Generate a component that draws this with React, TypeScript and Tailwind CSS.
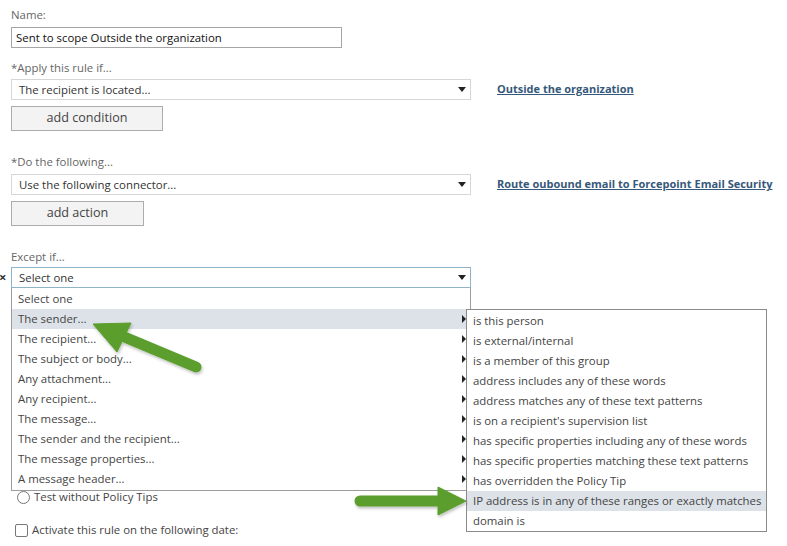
import React from 'react';

const senderItems = [
  'Select one',
  'The sender...',
  'The recipient...',
  'The subject or body...',
  'Any attachment...',
  'Any recipient...',
  'The message...',
  'The sender and the recipient...',
  'The message properties...',
  'A message header...',
];

const subItems = [
  'is this person',
  'is external/internal',
  'is a member of this group',
  'address includes any of these words',
  'address matches any of these text patterns',
  "is on a recipient's supervision list",
  'has specific properties including any of these words',
  'has specific properties matching these text patterns',
  'has overridden the Policy Tip',
  'IP address is in any of these ranges or exactly matches',
  'domain is',
];

function DownArrow() {
  return (
    <svg width="8" height="5" viewBox="0 0 8 5" className="shrink-0">
      <path d="M0 0h8L4 5z" fill="#222" />
    </svg>
  );
}

function RightArrow() {
  return (
    <svg width="4" height="8" viewBox="0 0 4 8" className="shrink-0">
      <path d="M0 0v8l4-4z" fill="#222" />
    </svg>
  );
}

function Select({ value, focused }: { value: string; focused?: boolean }) {
  return (
    <div
      className={`w-[460px] h-[21px] flex items-center justify-between pl-[7px] pr-[4px] bg-white border text-[#333] ${
        focused ? 'border-[#8fb3c9]' : 'border-[#d6d6d6]'
      }`}
    >
      <span className="whitespace-nowrap">{value}</span>
      <DownArrow />
    </div>
  );
}

function Label({ children }: { children: React.ReactNode }) {
  return <div className="h-[16px] leading-[16px] text-[#666]">{children}</div>;
}

function ActionButton({ children, width }: { children: React.ReactNode; width: string }) {
  return (
    <div
      className={`${width} h-[25px] flex items-center justify-center bg-[#f3f3f3] border border-[#acacac] text-[#444] text-[12.6px]`}
    >
      {children}
    </div>
  );
}

// green callout arrows drawn over the menus
function Arrows() {
  return (
    <svg className="absolute inset-0 pointer-events-none z-30" width="787" height="546">
      <defs>
        <filter id="sh" x="-20%" y="-20%" width="140%" height="140%">
          <feDropShadow dx="1" dy="2" stdDeviation="1.5" floodColor="#000" floodOpacity="0.25" />
        </filter>
      </defs>
      <g filter="url(#sh)" fill="#5b9e2d" stroke="#5b9e2d">
        <line x1="196" y1="367" x2="122" y2="336" strokeWidth="11" strokeLinecap="round" />
        <path d="M93 324 L131 323 L117 352 Z" strokeWidth="1" strokeLinejoin="round" />
        <line x1="360" y1="501" x2="440" y2="501" strokeWidth="11" strokeLinecap="round" />
        <path d="M466 501 L438 487 L438 515 Z" strokeWidth="1" strokeLinejoin="round" />
      </g>
    </svg>
  );
}

export default function App() {
  return (
    <div
      className="relative w-[787px] h-[546px] overflow-hidden bg-white text-[11.4px]"
      style={{ fontFamily: '"Open Sans", "Noto Sans", Arial, sans-serif' }}
    >
      <div className="flex flex-col pl-[11px] pt-[7px]">
        <Label>Name:</Label>
        <div className="mt-[4px] w-[331px] h-[21px] flex items-center pl-[4px] border border-[#a6a6a6] text-[#111]">
          Sent to scope Outside the organization
        </div>

        <div className="mt-[12px]">
          <Label>*Apply this rule if...</Label>
        </div>
        <div className="mt-[3px] flex items-center gap-[26px]">
          <Select value="The recipient is located..." />
          <span className="whitespace-nowrap font-bold underline text-[11px] text-[#36587a]">
            Outside the organization
          </span>
        </div>
        <div className="mt-[6px]">
          <ActionButton width="w-[152px]">add condition</ActionButton>
        </div>

        <div className="mt-[23px]">
          <Label>*Do the following...</Label>
        </div>
        <div className="mt-[4px] flex items-center gap-[26px]">
          <Select value="Use the following connector..." />
          <span className="whitespace-nowrap font-bold underline text-[11px] text-[#36587a]">
            Route oubound email to Forcepoint Email Security
          </span>
        </div>
        <div className="mt-[6px]">
          <ActionButton width="w-[133px]">add action</ActionButton>
        </div>

        <div className="mt-[23px]">
          <Label>Except if...</Label>
        </div>
        <div className="relative mt-[2px]">
          <span className="absolute left-[-12px] top-[1px] text-[13px] font-bold text-[#333]">×</span>
          <Select value="Select one" focused />

          <div className="absolute left-0 top-[21px] w-[460px] pt-[1px] pb-[1px] bg-white border border-[#9c9c9c] border-t-0 z-10">
            {senderItems.map((item, i) => (
              <div
                key={item}
                className={`h-[20px] flex items-center justify-between pl-[6px] pr-[4px] text-[#444] ${
                  i === 1 ? 'bg-[#dde2e8]' : ''
                }`}
              >
                <span className="whitespace-nowrap">{item}</span>
                {i > 0 && <RightArrow />}
              </div>
            ))}
          </div>

          <div className="absolute left-[455px] top-[42px] w-[301px] pt-[1px] bg-white border border-[#8a8a8a] z-20">
            {subItems.map((item, i) => (
              <div
                key={item}
                className={`h-[20px] flex items-center pl-[6px] whitespace-nowrap text-[#444] ${
                  i === 9 ? 'bg-[#dde2e8]' : ''
                }`}
              >
                {item}
              </div>
            ))}
          </div>
        </div>

        <div className="mt-[200px] flex items-center gap-[4px] pl-[6px] text-[#444] h-[18px]">
          <span className="w-[13px] h-[13px] rounded-full border border-[#777] bg-white" />
          <span>Test without Policy Tips</span>
        </div>
        <div className="mt-[15px] flex items-center gap-[4px] pl-[4px] text-[#444] h-[18px]">
          <span className="w-[13px] h-[13px] rounded-[2px] border border-[#777] bg-white" />
          <span>Activate this rule on the following date:</span>
        </div>
      </div>
      <Arrows />
    </div>
  );
}
